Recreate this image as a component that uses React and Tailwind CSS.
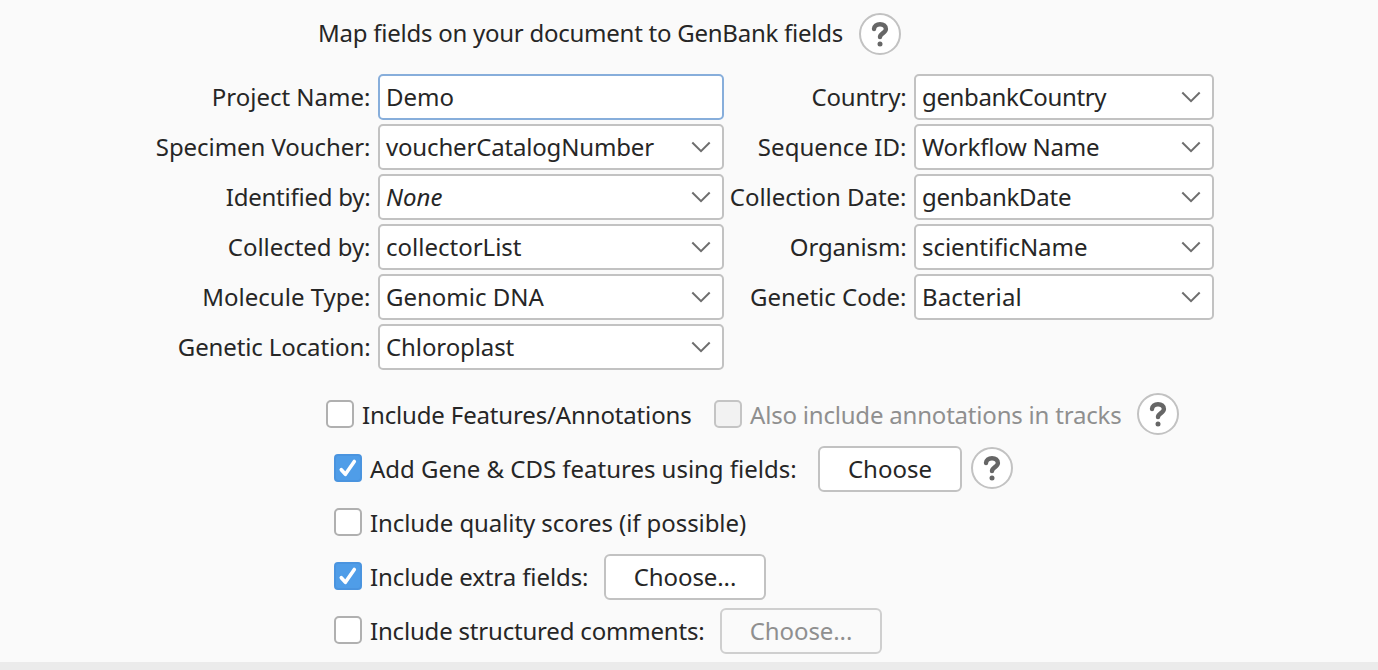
const leftFields = [
  { label: 'Project Name:', value: 'Demo', input: true },
  { label: 'Specimen Voucher:', value: 'voucherCatalogNumber', labelTrack: 'tracking-[-0.06px]', valueTrack: 'tracking-[-0.17px]' },
  { label: 'Identified by:', value: 'None', italic: true, labelTrack: 'tracking-[-0.24px]' },
  { label: 'Collected by:', value: 'collectorList', labelTrack: 'tracking-[-0.05px]' },
  { label: 'Molecule Type:', value: 'Genomic DNA' },
  { label: 'Genetic Location:', value: 'Chloroplast', labelTrack: 'tracking-[-0.12px]', valueTrack: 'tracking-[-0.1px]' },
];

const rightFields = [
  { label: 'Country:', value: 'genbankCountry', labelTrack: 'tracking-[-0.2px]', valueTrack: 'tracking-[-0.36px]' },
  { label: 'Sequence ID:', value: 'Workflow Name', labelTrack: 'tracking-[0.05px]', valueTrack: 'tracking-[-0.23px]' },
  { label: 'Collection Date:', value: 'genbankDate', labelTrack: 'tracking-[-0.03px]', valueTrack: 'tracking-[-0.27px]' },
  { label: 'Organism:', value: 'scientificName', labelTrack: 'tracking-[-0.15px]', valueTrack: 'tracking-[-0.05px]' },
  { label: 'Genetic Code:', value: 'Bacterial', valueTrack: 'tracking-[0.15px]' },
];

function Chevron() {
  return (
    <svg className="size-5 shrink-0" viewBox="0 0 20 20" fill="none" stroke="#6e6e6e" strokeWidth="2">
      <path d="M1.3 5.5 10 14.2 18.7 5.5" />
    </svg>
  );
}

function Help() {
  return (
    <button aria-label="Help" className="size-[42px] shrink-0 rounded-full border-2 border-[#c2c2c2] bg-white">
      <svg className="size-[38px]" viewBox="0 0 38 38" fill="none" stroke="#666666" strokeWidth="4.4">
        <path d="M13 14C13.200 11 15.600 9.200 19 9.200c3.600 0 5.900 2 5.900 4.800 0 3.900-5.800 4.300-5.900 8.100" strokeLinecap="round" />
        <circle cx="19" cy="29" r="2.500" fill="#666666" stroke="none" />
      </svg>
    </button>
  );
}

function Field({ field, width }) {
  return (
    <div className="flex h-[46px] items-center gap-[7.5px]">
      <label className={`flex-1 text-right whitespace-nowrap ${field.labelTrack ?? ''}`}>{field.label}</label>
      <div
        className={`flex h-[46px] items-center justify-between rounded-[5px] border-2 bg-white pr-[11px] pl-1.5 ${width} ${
          field.input ? 'border-[#87aedb]' : 'border-[#c2c2c2]'
        }`}
      >
        <span className={`${field.italic ? 'italic' : ''} ${field.valueTrack ?? ''}`}>{field.value}</span>
        {!field.input && <Chevron />}
      </div>
    </div>
  );
}

function Checkbox({ checked, disabled }) {
  if (checked) {
    return (
      <span className="size-7 shrink-0 rounded-[4px] border-2 border-[#4a94df] bg-[#4f9de8]">
        <svg className="size-6" viewBox="0 0 24 24" fill="none" stroke="white" strokeWidth="3.6" strokeLinecap="round" strokeLinejoin="round">
          <path d="M5.300 13.700 9.400 18.300 18.300 5.500" />
        </svg>
      </span>
    );
  }
  return (
    <span
      className={`size-7 shrink-0 rounded-[5px] border-2 ${
        disabled ? 'border-[#c4c4c4] bg-[#f2f2f2]' : 'border-[#b0b0b0] bg-white'
      }`}
    />
  );
}

function Button({ children, className }) {
  return <button className={`mt-0.5 h-[46px] shrink-0 rounded-[6px] border-2 ${className}`}>{children}</button>;
}

export default function App() {
  return (
    <div className="flex h-[670px] w-[1378px] flex-col overflow-hidden bg-[#fafafa] font-['Noto_Sans',sans-serif] text-[24px] leading-[46px] whitespace-nowrap text-[#262626]">
      <header className="flex h-[74px] items-start pt-[13px] pl-[318px]">
        <h1 className="w-[541px] leading-[40px] tracking-[-0.25px]">Map fields on your document to GenBank fields</h1>
        <Help />
      </header>
      <main className="flex h-[588px] flex-col">
        <div className="flex h-[313px] items-start">
          <div className="flex w-[724px] flex-col gap-1">
            {leftFields.map((f) => (
              <Field key={f.label} field={f} width="w-[346px]" />
            ))}
          </div>
          <div className="flex w-[490px] flex-col gap-1">
            {rightFields.map((f) => (
              <Field key={f.label} field={f} width="w-[300px]" />
            ))}
          </div>
        </div>
        <div className="flex h-[54px] items-center pl-[326px]">
          <Checkbox />
          <span className="ml-2 w-[352px] pt-0.5 tracking-[-0.15px]">Include Features/Annotations</span>
          <Checkbox disabled />
          <span className="ml-2 w-[387px] pt-0.5 tracking-[-0.2px] text-[#8f8f8f]">Also include annotations in tracks</span>
          <Help />
        </div>
        <div className="flex h-[54px] items-center pl-[334px]">
          <Checkbox checked />
          <span className="ml-2 w-[448px] pt-0.5 tracking-[-0.02px]">Add Gene &amp; CDS features using fields:</span>
          <Button className="mr-[9px] w-36 border-[#c2c2c2] bg-white leading-[42px]">Choose</Button>
          <Help />
        </div>
        <div className="flex h-[54px] items-center pl-[334px]">
          <Checkbox />
          <span className="ml-2 pt-0.5 tracking-[-0.08px]">Include quality scores (if possible)</span>
        </div>
        <div className="flex h-[54px] items-center pl-[334px]">
          <Checkbox checked />
          <span className="ml-2 w-[234px] pt-0.5 tracking-[-0.1px]">Include extra fields:</span>
          <Button className="w-[162px] border-[#c2c2c2] bg-white leading-[42px] tracking-[-0.1px]">Choose...</Button>
        </div>
        <div className="flex h-[54px] items-center pl-[334px]">
          <Checkbox />
          <span className="ml-2 w-[350px] pt-0.5 tracking-[-0.19px]">Include structured comments:</span>
          <Button className="w-[162px] border-[#cfcfcf] bg-[#fafafa] leading-[42px] tracking-[-0.1px] text-[#8f8f8f]">Choose...</Button>
        </div>
      </main>
      <footer className="h-2 bg-[#ebebeb]" />
    </div>
  );
}
